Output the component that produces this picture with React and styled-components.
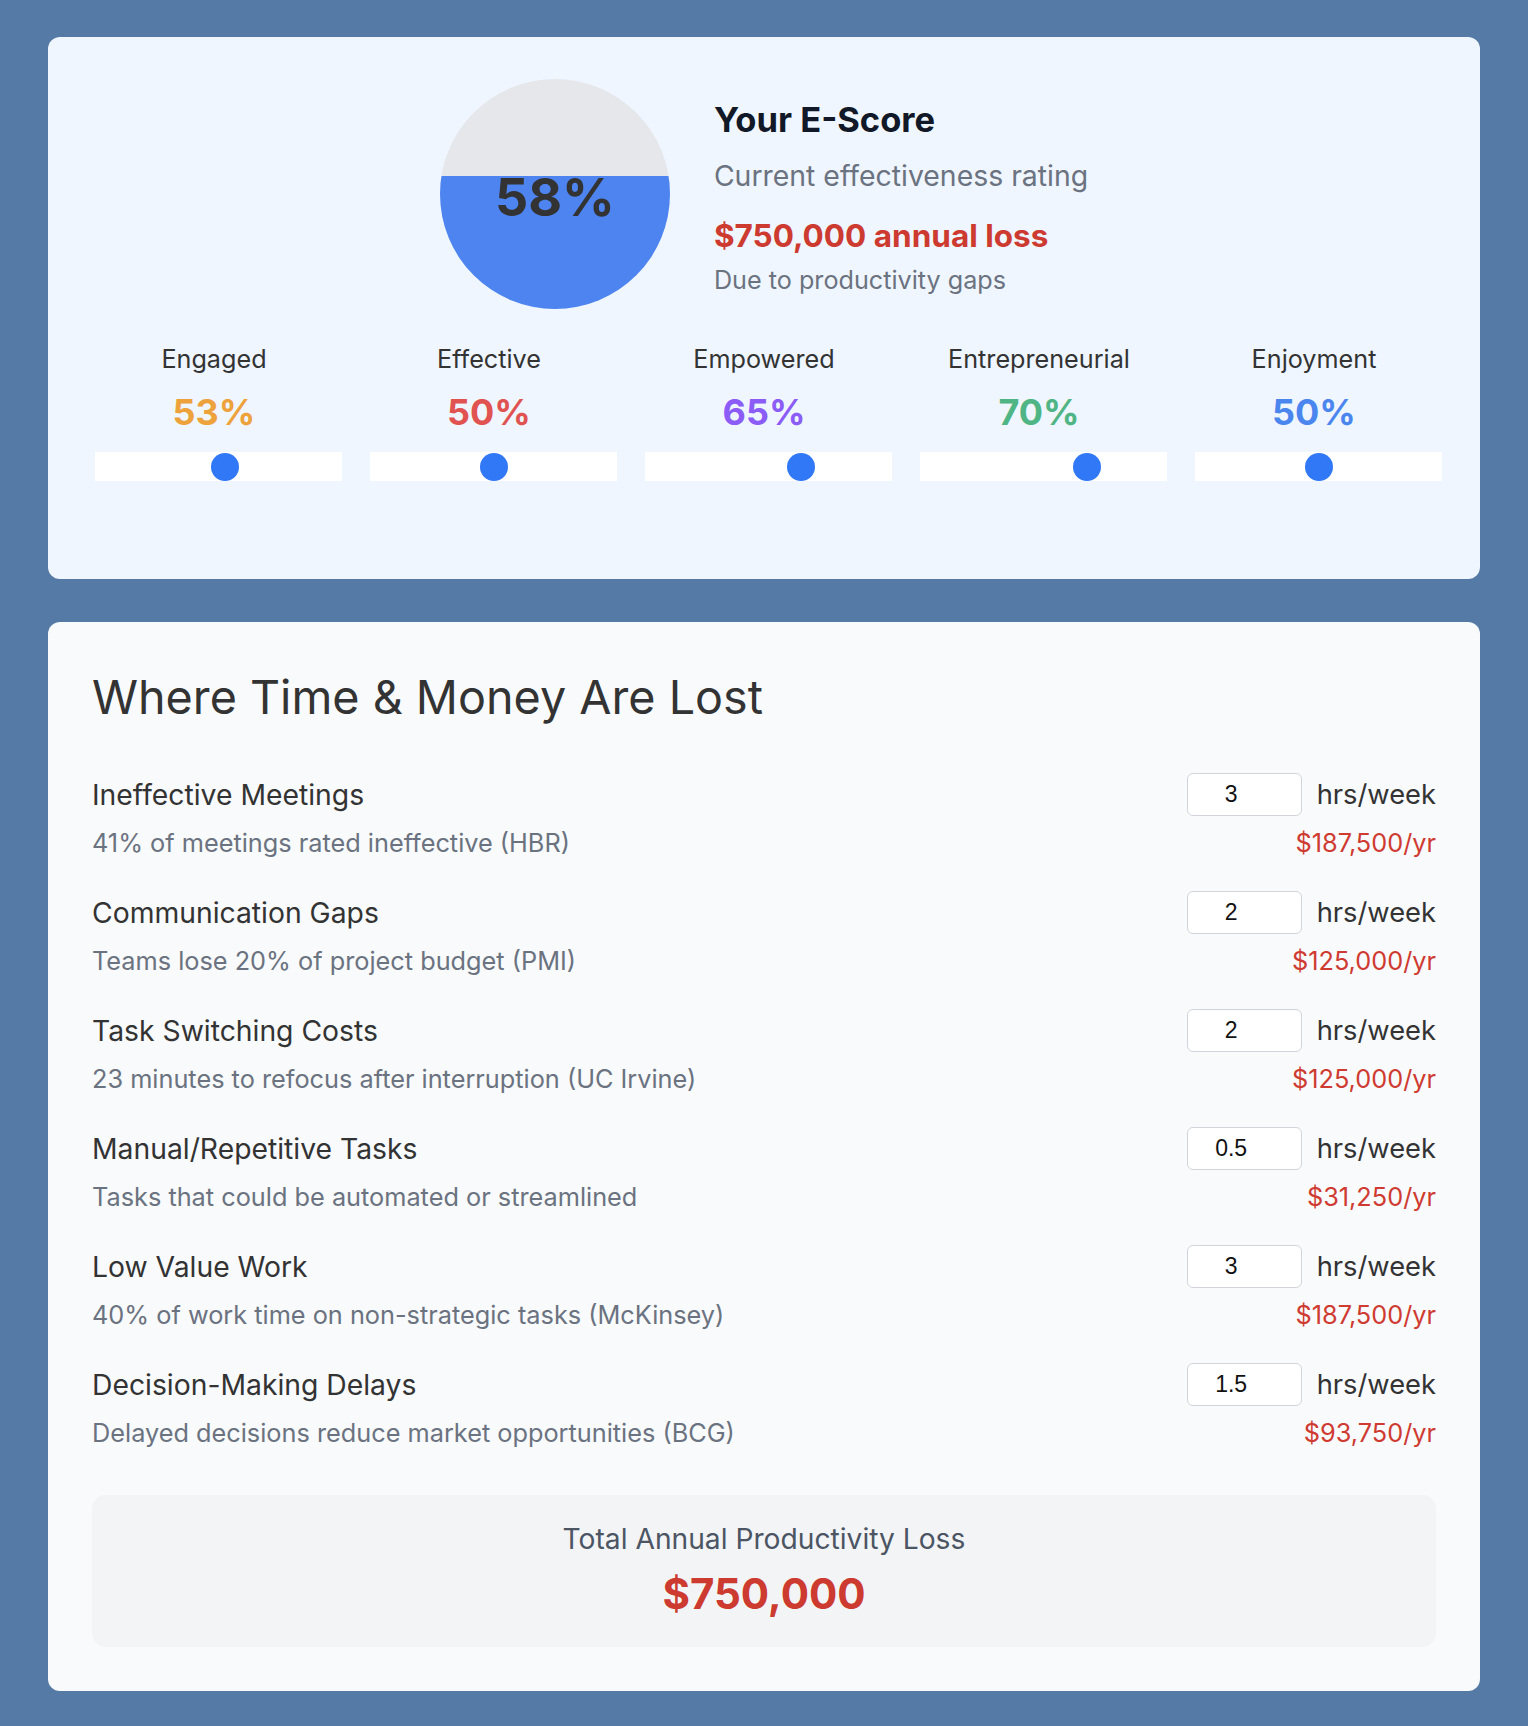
import { useState } from "react";
import styled, { createGlobalStyle } from "styled-components";

const GlobalStyle = createGlobalStyle`
  * {
    box-sizing: border-box;
  }
  body {
    margin: 0;
    background: #557aa6;
    font-family: Inter, "Noto Sans", "Liberation Sans", sans-serif;
    color: #333333;
  }
`;

const dimensions = [
  { name: "Engaged", value: 53, color: "#eea23c" },
  { name: "Effective", value: 50, color: "#e05350" },
  { name: "Empowered", value: 65, color: "#8b5cf6" },
  { name: "Entrepreneurial", value: 70, color: "#4fb584" },
  { name: "Enjoyment", value: 50, color: "#4b86ef" },
];

const losses = [
  { name: "Ineffective Meetings", note: "41% of meetings rated ineffective (HBR)", hours: "3" },
  { name: "Communication Gaps", note: "Teams lose 20% of project budget (PMI)", hours: "2" },
  { name: "Task Switching Costs", note: "23 minutes to refocus after interruption (UC Irvine)", hours: "2" },
  { name: "Manual/Repetitive Tasks", note: "Tasks that could be automated or streamlined", hours: "0.5" },
  { name: "Low Value Work", note: "40% of work time on non-strategic tasks (McKinsey)", hours: "3" },
  { name: "Decision-Making Delays", note: "Delayed decisions reduce market opportunities (BCG)", hours: "1.5" },
];

// cost of one weekly hour over a year
const RATE = 62500;

function money(n) {
  return "$" + Math.round(n).toLocaleString("en-US");
}

export default function App() {
  const [scores, setScores] = useState(dimensions.map((d) => d.value));
  const [hours, setHours] = useState(losses.map((l) => l.hours));

  const total = hours.reduce((sum, h) => sum + (parseFloat(h) || 0) * RATE, 0);

  return (
    <Page>
      <GlobalStyle />
      <ScoreCard>
        <Header>
          <Gauge $fill={58}>
            <GaugeValue>58%</GaugeValue>
          </Gauge>
          <Summary>
            <SummaryTitle>Your E-Score</SummaryTitle>
            <SummarySub>Current effectiveness rating</SummarySub>
            <SummaryLoss>{money(total)} annual loss</SummaryLoss>
            <SummaryNote>Due to productivity gaps</SummaryNote>
          </Summary>
        </Header>

        <Dimensions>
          {dimensions.map((d, i) => (
            <Dimension key={d.name}>
              <DimLabel>{d.name}</DimLabel>
              <DimValue $color={d.color}>{scores[i]}%</DimValue>
              <Slider
                type="range"
                min="0"
                max="100"
                value={scores[i]}
                onChange={(e) => {
                  const next = [...scores];
                  next[i] = Number(e.target.value);
                  setScores(next);
                }}
              />
            </Dimension>
          ))}
        </Dimensions>
      </ScoreCard>

      <LossCard>
        <LossTitle>Where Time &amp; Money Are Lost</LossTitle>
        <LossList>
          {losses.map((l, i) => (
            <LossRow key={l.name}>
              <LossName>{l.name}</LossName>
              <HoursBox>
                <HoursInput
                  value={hours[i]}
                  onChange={(e) => {
                    const next = [...hours];
                    next[i] = e.target.value;
                    setHours(next);
                  }}
                />
                <Unit>hrs/week</Unit>
              </HoursBox>
              <LossNote>{l.note}</LossNote>
              <LossCost>{money((parseFloat(hours[i]) || 0) * RATE)}/yr</LossCost>
            </LossRow>
          ))}
        </LossList>

        <TotalBox>
          <TotalLabel>Total Annual Productivity Loss</TotalLabel>
          <TotalValue>{money(total)}</TotalValue>
        </TotalBox>
      </LossCard>
    </Page>
  );
}

const Page = styled.div`
  display: flex;
  flex-direction: column;
  gap: 43px;
  padding: 37px 48px 36px;
`;

const ScoreCard = styled.section`
  background: #eff6ff;
  border-radius: 12px;
  padding: 42px 47px 98px;
`;

const Header = styled.div`
  display: flex;
  justify-content: center;
  align-items: center;
  gap: 44px;
`;

const Gauge = styled.div`
  width: 230px;
  height: 230px;
  border-radius: 50%;
  flex-shrink: 0;
  background: linear-gradient(
    to top,
    #4d84ef ${(p) => p.$fill}%,
    #e5e7eb ${(p) => p.$fill}%
  );
  display: flex;
  justify-content: center;
  align-items: center;
`;

const GaugeValue = styled.span`
  font-size: 52px;
  font-weight: 700;
  color: #333333;
  margin-top: 6px;
`;

const Summary = styled.div`
  display: flex;
  flex-direction: column;
  margin-top: 6px;
`;

const SummaryTitle = styled.h2`
  margin: 0;
  font-size: 34.5px;
  line-height: 40px;
  font-weight: 700;
  color: #111827;
`;

const SummarySub = styled.p`
  margin: 20px 0 0;
  font-size: 28.4px;
  line-height: 32px;
  color: #6b7280;
`;

const SummaryLoss = styled.p`
  margin: 26px 0 0;
  font-size: 31.5px;
  line-height: 36px;
  font-weight: 700;
  color: #cc3a30;
`;

const SummaryNote = styled.p`
  margin: 12px 0 0;
  font-size: 25.2px;
  line-height: 28px;
  color: #6b7280;
`;

const Dimensions = styled.div`
  display: grid;
  grid-template-columns: repeat(5, 1fr);
  gap: 37px;
  margin-top: 36px;
`;

const Dimension = styled.div`
  display: flex;
  flex-direction: column;
  align-items: center;
`;

const DimLabel = styled.div`
  font-size: 25.2px;
  line-height: 28px;
  color: #333333;
`;

const DimValue = styled.div`
  margin-top: 17px;
  font-size: 36px;
  line-height: 44px;
  font-weight: 700;
  color: ${(p) => p.$color};
`;

const Slider = styled.input`
  -webkit-appearance: none;
  appearance: none;
  align-self: flex-start;
  width: calc(100% + 9px);
  height: 29px;
  margin: 18px 0 0;
  background: #ffffff;
  outline: none;

  &::-webkit-slider-runnable-track {
    height: 29px;
    background: #ffffff;
  }

  &::-webkit-slider-thumb {
    -webkit-appearance: none;
    appearance: none;
    width: 28px;
    height: 28px;
    margin-top: 0.5px;
    border-radius: 50%;
    background: #3178f6;
    border: none;
    cursor: pointer;
  }

  &::-moz-range-thumb {
    width: 28px;
    height: 28px;
    border-radius: 50%;
    background: #3178f6;
    border: none;
  }
`;

const LossCard = styled.section`
  background: #f8fafc;
  border-radius: 12px;
  padding: 44px;
`;

const LossTitle = styled.h2`
  margin: 0;
  padding-top: 2px;
  font-size: 46.7px;
  line-height: 58px;
  font-weight: 400;
  color: #333333;
`;

const LossList = styled.div`
  display: flex;
  flex-direction: column;
  gap: 34px;
  margin-top: 47px;
`;

const LossRow = styled.div`
  display: grid;
  grid-template-columns: 1fr auto;
  align-items: center;
  row-gap: 13px;
`;

const LossName = styled.div`
  font-size: 28.3px;
  line-height: 32px;
  color: #333333;
`;

const HoursBox = styled.div`
  display: flex;
  align-items: center;
  justify-content: flex-end;
  gap: 15px;
`;

const HoursInput = styled.input`
  width: 115px;
  height: 43px;
  border: 1px solid #d1d5db;
  border-radius: 6px;
  background: #ffffff;
  padding: 0 34px 0 8px;
  text-align: center;
  font-family: "Liberation Sans", Arial, sans-serif;
  font-size: 23px;
  color: #111111;
  outline: none;
`;

const Unit = styled.span`
  font-size: 27.3px;
  line-height: 32px;
  color: #333333;
`;

const LossNote = styled.div`
  font-size: 25.3px;
  line-height: 28px;
  color: #6b7280;
`;

const LossCost = styled.div`
  font-size: 25.3px;
  line-height: 28px;
  color: #cf3b31;
  text-align: right;
`;

const TotalBox = styled.div`
  margin-top: 48px;
  background: #f3f4f6;
  border-radius: 14px;
  padding: 28px 20px 29px;
  display: flex;
  flex-direction: column;
  align-items: center;
  gap: 15px;
`;

const TotalLabel = styled.div`
  font-size: 28.2px;
  line-height: 32px;
  color: #4b5563;
`;

const TotalValue = styled.div`
  font-size: 42px;
  line-height: 48px;
  font-weight: 700;
  color: #cc3a30;
`;
